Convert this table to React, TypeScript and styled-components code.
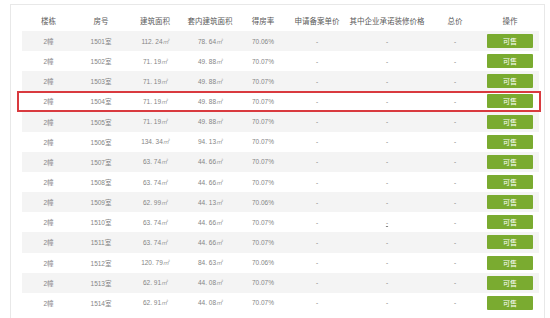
import * as React from 'react';
import styled, { createGlobalStyle } from 'styled-components';

const GlobalStyle = createGlobalStyle`
  html, body {
    margin: 0;
    padding: 0;
    background: #ffffff;
    font-family: "Liberation Sans", "Noto Sans CJK SC", sans-serif;
  }
`;

const Page = styled.main`
  width: 550px;
  height: 318px;
  box-sizing: border-box;
  padding: 4px 5px 0 10px;
  overflow: hidden;
`;

const Panel = styled.section`
  height: 100%;
  box-sizing: border-box;
  border: 1px solid #e8e8e8;
  border-bottom: none;
  padding: 5px 4px 0 11px;
`;

const Table = styled.table`
  width: 517px;
  table-layout: fixed;
  border-collapse: collapse;
`;

const HeadCell = styled.th<{ $w: number }>`
  width: ${p => p.$w}px;
  height: 21px;
  padding: 0;
  font-size: 7.5px;
  font-weight: normal;
  color: #5a5a5a;
  text-align: center;
  white-space: nowrap;
`;

const Row = styled.tr<{ $striped: boolean; $marked?: boolean }>`
  position: relative;
  height: 20.15px;
  background: ${p => (p.$striped ? '#f4f4f4' : 'transparent')};

  ${p =>
    p.$marked &&
    `
    & > td:first-child::after {
      content: '';
      position: absolute;
      left: -5px;
      right: -2px;
      top: 0;
      bottom: 0;
      border: 2px solid #d93a3f;
      pointer-events: none;
    }
  `}
`;

const Cell = styled.td<{ $underline?: boolean }>`
  padding: 0;
  font-size: 6.5px;
  color: #858585;
  text-align: center;
  white-space: nowrap;
  text-decoration: ${p => (p.$underline ? 'underline' : 'none')};
`;

const Unit = styled.span`
  font-size: 6px;
  color: #a0a0a0;
  font-style: italic;
`;

const SaleButton = styled.button`
  width: 46px;
  height: 14px;
  margin: 0 auto;
  display: flex;
  align-items: center;
  justify-content: center;
  padding: 0;
  border: none;
  border-radius: 1px;
  background: #7aab30;
  color: #ffffff;
  font-family: inherit;
  font-size: 7px;
  cursor: pointer;
`;

const columns = [
  { title: '楼栋', w: 53 },
  { title: '房号', w: 52 },
  { title: '建筑面积', w: 56 },
  { title: '套内建筑面积', w: 54 },
  { title: '得房率', w: 52 },
  { title: '申请备案单价', w: 56 },
  { title: '其中企业承诺装修价格', w: 84 },
  { title: '总价', w: 52 },
  { title: '操作', w: 58 },
];

const rooms = [
  ['1501', '112. 24', '78. 64', '70.06%'],
  ['1502', '71. 19', '49. 88', '70.07%'],
  ['1503', '71. 19', '49. 88', '70.07%'],
  ['1504', '71. 19', '49. 88', '70.07%'],
  ['1505', '71. 19', '49. 88', '70.07%'],
  ['1506', '134. 34', '94. 13', '70.07%'],
  ['1507', '63. 74', '44. 66', '70.07%'],
  ['1508', '63. 74', '44. 66', '70.07%'],
  ['1509', '62. 99', '44. 13', '70.06%'],
  ['1510', '63. 74', '44. 66', '70.07%'],
  ['1511', '63. 74', '44. 66', '70.07%'],
  ['1512', '120. 79', '84. 63', '70.06%'],
  ['1513', '62. 91', '44. 08', '70.07%'],
  ['1514', '62. 91', '44. 08', '70.07%'],
];

const App = () => {
  return (
    <>
      <GlobalStyle />
      <Page>
        <Panel>
          <Table>
            <thead>
              <tr>
                {columns.map(c => (
                  <HeadCell key={c.title} $w={c.w}>
                    {c.title}
                  </HeadCell>
                ))}
              </tr>
            </thead>
            <tbody>
              {rooms.map(([no, area, inner, rate], i) => (
                <Row key={no} $striped={i % 2 === 0} $marked={no === '1504'}>
                  <Cell>2幢</Cell>
                  <Cell>{no}室</Cell>
                  <Cell>
                    {area}
                    <Unit>㎡</Unit>
                  </Cell>
                  <Cell>
                    {inner}
                    <Unit>㎡</Unit>
                  </Cell>
                  <Cell>{rate}</Cell>
                  <Cell>-</Cell>
                  <Cell $underline={no === '1510'}>-</Cell>
                  <Cell>-</Cell>
                  <Cell>
                    <SaleButton>可售</SaleButton>
                  </Cell>
                </Row>
              ))}
            </tbody>
          </Table>
        </Panel>
      </Page>
    </>
  );
};

export default App;
